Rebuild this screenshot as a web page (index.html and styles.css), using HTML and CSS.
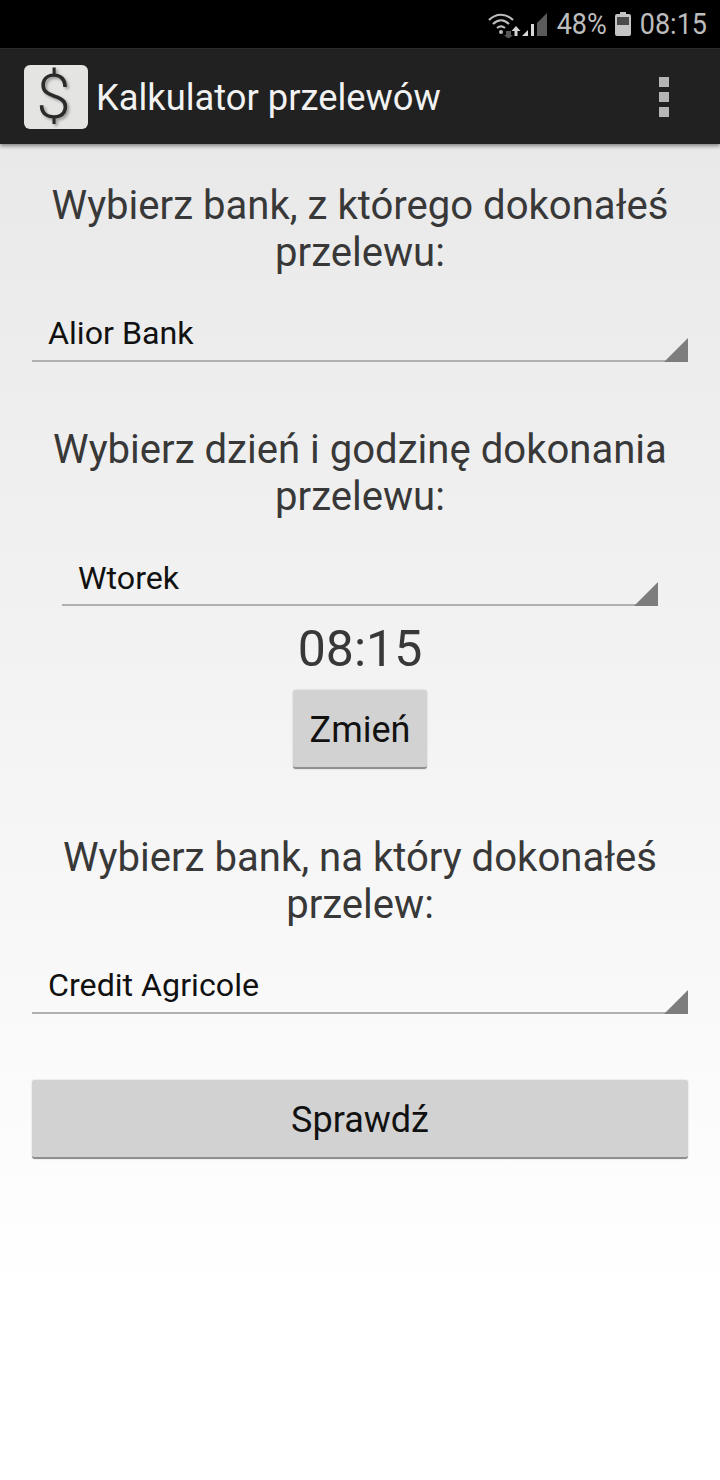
FILE: index.html
```html
<!DOCTYPE html>
<html lang="pl">
<head>
<meta charset="UTF-8" />
<meta name="viewport" content="width=device-width, initial-scale=1" />
<title>Kalkulator przelewów</title>
<link rel="stylesheet" href="styles.css">
</head>
<body>

<div class="status-bar">
  <svg class="wifi" width="36" height="26" viewBox="0 0 36 26">
    <g fill="none" stroke="#bdbdbd" stroke-width="2.2">
      <path d="M1 8 C8 1 18 1 25 8" />
      <path d="M5 12 C10 7 16 7 21 12" />
      <path d="M9 16 C11.500 14 14.500 14 17 16" />
    </g>
    <circle cx="13" cy="20" r="2" fill="#bdbdbd" />
    <path d="M18 19h5v4h2l-4.500 4-4.500-4h2z" fill="#555" />
    <path d="M28 14l4.500 5h-3v5h-3v-5h-3z" fill="#d4d4d4" />
  </svg>
  <svg class="signal" width="26" height="24" viewBox="0 0 26 24">
    <path d="M0 23 L6 17 V23Z" fill="#d8d8d8" />
    <rect x="9" y="11" width="3" height="12" fill="#d8d8d8" />
    <path d="M15 10 L25 0 V23 H15Z" fill="#5a5a5a" />
  </svg>
  <span class="status-text">48%</span>
  <svg class="battery" width="16" height="24" viewBox="0 0 16 24">
    <path d="M5 0h6v2h3a2 2 0 0 1 2 2v18a2 2 0 0 1-2 2H2a2 2 0 0 1-2-2V4a2 2 0 0 1 2-2h3z" fill="#c4c4c4" />
    <rect x="2" y="5" width="12" height="8" fill="#4a4a4a" />
  </svg>
  <span class="status-text">08:15</span>
</div>

<header class="app-bar">
  <div class="app-icon"><span>$</span></div>
  <h1>Kalkulator przelewów</h1>
  <div class="menu-dots"><i></i><i></i><i></i></div>
</header>

<main class="content">
  <h2>Wybierz bank, z którego dokonałeś przelewu:</h2>
  <div class="spinner">Alior Bank</div>

  <h2 class="day-title">Wybierz dzień i godzinę dokonania przelewu:</h2>
  <div class="spinner narrow">Wtorek</div>
  <div class="time">08:15</div>
  <button class="btn small">Zmień</button>

  <h2 class="to-title">Wybierz bank, na który dokonałeś przelew:</h2>
  <div class="spinner">Credit Agricole</div>

  <button class="btn wide">Sprawdź</button>
</main>

</body>
</html>
```

FILE: styles.css
```css
* {
  box-sizing: border-box;
}

html, body {
  height: 100%;
}

body {
  margin: 0;
  font-family: Roboto, 'Liberation Sans', sans-serif;
  background: linear-gradient(180deg, #e9e9e9 144px, #f5f5f5 800px, #fff 1300px);
  color: #333;
  overflow: hidden;
}

.status-bar {
  height: 48px;
  background: #000;
  display: flex;
  align-items: center;
  justify-content: flex-end;
  padding-right: 13px;
  color: #bdbdbd;
}

/* the phone's status font is narrower and taller than Roboto */
.status-text {
  font-size: 27px;
  line-height: 1;
  transform: scaleY(1.08);
}

.wifi {
  margin-top: 2px;
}

.signal {
  margin: 2px 9px 0 -2px;
}

.battery {
  margin: 0 9px 0 8px;
}

.app-bar {
  height: 96px;
  background: #212121;
  border-top: 1px solid #2b2b2b;
  display: flex;
  align-items: center;
  padding: 0 24px;
  box-shadow: 0 2px 4px rgba(0, 0, 0, 0.45);
}

.app-icon {
  width: 64px;
  height: 64px;
  background: #e4e4e2;
  border-radius: 6px;
  display: flex;
  align-items: center;
  justify-content: center;
  flex-shrink: 0;
}

.app-icon span {
  margin-right: 5px;
  font-size: 62px;
  font-weight: 300;
  line-height: 1;
  color: #2a2a2a;
  text-shadow: 2px 2px 3px rgba(0, 0, 0, 0.35);
}

.app-bar h1 {
  flex: 1;
  margin: 2px 0 0 8px;
  font-size: 36.3px;
  font-weight: 400;
  color: #f2f2f2;
}

.menu-dots {
  display: flex;
  flex-direction: column;
  gap: 5px;
  margin-right: 27px;
}

.menu-dots i {
  display: block;
  width: 10px;
  height: 10px;
  background: #b5b5b5;
}

.content {
  padding: 38px 32px 0;
  display: flex;
  flex-direction: column;
  align-items: center;
}

h2 {
  margin: 0;
  font-size: 40.1px;
  font-weight: 400;
  line-height: 47px;
  text-align: center;
  color: #383838;
}

.day-title {
  margin-top: 64px;
}

.to-title {
  margin-top: 65px;
}

.spinner {
  position: relative;
  width: 100%;
  height: 70px;
  margin-top: 16px;
  padding: 22px 16px 0;
  font-size: 32.2px;
  line-height: 38px;
  color: #111;
  border-bottom: 2px solid #b0b0b0;
}

.spinner::after {
  content: "";
  position: absolute;
  right: 0;
  bottom: -2px;
  width: 24px;
  height: 24px;
  background: #7d7d7d;
  clip-path: polygon(100% 0, 100% 100%, 0 100%);
}

.spinner.narrow {
  width: 596px;
  padding-top: 23px;
}

.time {
  margin-top: 14px;
  font-size: 50px;
  line-height: 59px;
  color: #383838;
}

.btn {
  display: block;
  height: 79px;
  padding: 3px 0 0;
  background: #d2d2d2;
  border: none;
  border-bottom: 2px solid #8f8f8f;
  border-radius: 3px;
  font-family: Roboto, 'Liberation Sans', sans-serif;
  font-size: 36px;
  color: #111;
  box-shadow: 0 0 2px rgba(0, 0, 0, 0.2);
}

.btn.small {
  width: 134px;
  margin-top: 11px;
}

.btn.wide {
  width: 100%;
  margin-top: 66px;
}
```
